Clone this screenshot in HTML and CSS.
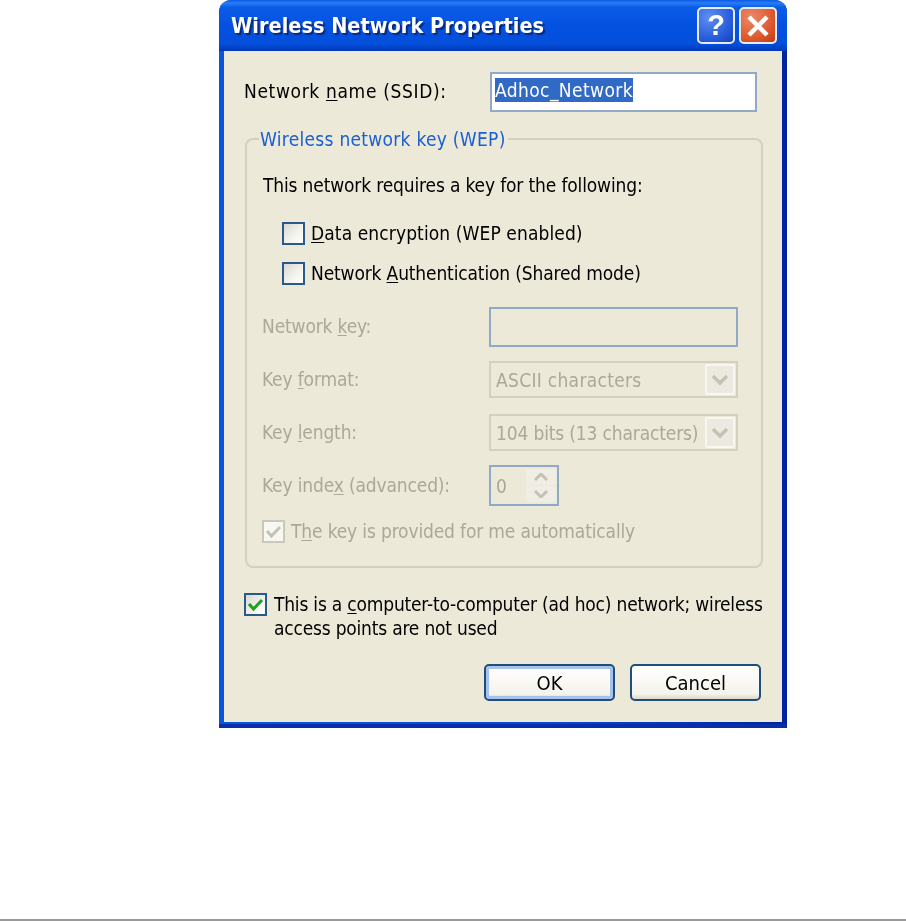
FILE: index.html
```html
<!DOCTYPE html>
<html lang="en">
  <head>
    <meta charset="utf-8">
    <meta name="viewport" content="width=device-width, initial-scale=1.0">
    <title>Wireless Network Properties</title>
    <link rel="stylesheet" href="styles.css">
  </head>
  <body>
    <div class="dialog">
      <div class="titlebar">
        <span class="title-text">Wireless Network Properties</span>
        <div class="title-buttons">
          <div class="title-button help-button">?</div>
          <div class="title-button close-button">
            <svg width="24" height="24" viewBox="0 0 24 24"><path d="M3 3 L21 21 M21 3 L3 21" stroke="#fff" stroke-width="4.5" fill="none"/></svg>
          </div>
        </div>
      </div>
      <div class="client">
        <div class="name-row">
          <span class="name-label">Network <u>n</u>ame (SSID):</span>
          <div class="name-input"><span class="selected-text">Adhoc_Network</span></div>
        </div>

        <fieldset class="key-group">
          <legend>Wireless network key (WEP)</legend>
          <div class="intro">This network requires a key for the following:</div>

          <div class="check-row first-check">
            <span class="checkbox"></span>
            <span><u>D</u>ata encryption (WEP enabled)</span>
          </div>
          <div class="check-row second-check">
            <span class="checkbox"></span>
            <span>Network <u>A</u>uthentication (Shared mode)</span>
          </div>

          <div class="field-row key-row">
            <span class="field-label">Network <u>k</u>ey:</span>
            <div class="text-box"></div>
          </div>
          <div class="field-row format-row">
            <span class="field-label">Key <u>f</u>ormat:</span>
            <div class="select-box">
              <span class="select-value ascii-value">ASCII characters</span>
              <span class="select-arrow">
                <svg width="20" height="12" viewBox="0 0 20 12"><path d="M3 2 L10 9 L17 2" stroke="#c4c2b2" stroke-width="3.5" fill="none"/></svg>
              </span>
            </div>
          </div>
          <div class="field-row length-row">
            <span class="field-label">Key <u>l</u>ength:</span>
            <div class="select-box">
              <span class="select-value">104 bits (13 characters)</span>
              <span class="select-arrow">
                <svg width="20" height="12" viewBox="0 0 20 12"><path d="M3 2 L10 9 L17 2" stroke="#c4c2b2" stroke-width="3.5" fill="none"/></svg>
              </span>
            </div>
          </div>
          <div class="field-row index-row">
            <span class="field-label">Key inde<u>x</u> (advanced):</span>
            <div class="spin-box">
              <span class="spin-value">0</span>
              <div class="spin-buttons">
                <span class="spin-button"><svg width="14" height="8" viewBox="0 0 14 8"><path d="M1 7 L7 1 L13 7" stroke="#c4c2b2" stroke-width="3" fill="none"/></svg></span>
                <span class="spin-button"><svg width="14" height="8" viewBox="0 0 14 8"><path d="M1 1 L7 7 L13 1" stroke="#c4c2b2" stroke-width="3" fill="none"/></svg></span>
              </div>
            </div>
          </div>

          <div class="check-row auto-check disabled">
            <span class="checkbox checkbox-disabled">
              <svg width="17" height="15" viewBox="0 0 17 15"><path d="M2 7 L6.5 12 L15 3" stroke="#c4c2b2" stroke-width="3" fill="none"/></svg>
            </span>
            <span>T<u>h</u>e key is provided for me automatically</span>
          </div>
        </fieldset>

        <div class="adhoc-row">
          <span class="checkbox">
            <svg width="17" height="15" viewBox="0 0 17 15"><path d="M2 7 L6.5 12 L15 3" stroke="#21a121" stroke-width="3.2" fill="none"/></svg>
          </span>
          <span class="adhoc-text">This is a <u>c</u>omputer-to-computer (ad hoc) network; wireless<br>access points are not used</span>
        </div>

        <div class="actions">
          <button class="action-button default-button">OK</button>
          <button class="action-button">Cancel</button>
        </div>
      </div>
    </div>
    <div class="page-rule"></div>
  </body>
</html>
```
FILE: styles.css
```css
body {
  margin: 0;
  padding: 0;
  background: #fff;
  color: #000;
  font-family: "DejaVu Sans", "Liberation Sans", sans-serif;
  font-stretch: condensed;
  font-size: 19px;
  letter-spacing: -0.15px;
}
u {
  text-underline-offset: 2px;
}
.dialog {
  box-sizing: border-box;
  display: flex;
  flex-direction: column;
  width: 568px;
  height: 728px;
  margin-left: 219px;
  padding: 0 5px 2px 5px;
  border-radius: 12px 12px 0 0;
  background: linear-gradient(90deg, #0a55d8 0%, #0648d0 60%, #00249c 100%);
  border-bottom: 4px solid #0a2ea8;
  filter: blur(0.5px);
}
.titlebar {
  display: flex;
  align-items: center;
  height: 51px;
  margin: 0 -5px;
  padding: 0 10px 0 12px;
  box-sizing: border-box;
  border-radius: 12px 12px 0 0;
  background: linear-gradient(180deg, #0a5ae6 0%, #2c7cf4 6%, #0a5ce8 14%, #0450e0 55%, #0450dc 85%, #0038b8 100%);
}
.title-text {
  color: #fff;
  font-weight: bold;
  font-size: 21.5px;
  letter-spacing: 0;
  text-shadow: 2px 2px 1px #0a2a80;
}
.title-buttons {
  display: flex;
  gap: 4px;
  margin-left: auto;
}
.title-button {
  box-sizing: border-box;
  display: flex;
  align-items: center;
  justify-content: center;
  width: 38px;
  height: 37px;
  border: 2px solid #e4ecfb;
  border-radius: 5px;
}
.help-button {
  background: radial-gradient(circle at 30% 25%, #5f8ff0 0%, #2a5fdc 60%, #1540b8 100%);
  color: #fff;
  font-family: "Liberation Sans", sans-serif;
  font-size: 29px;
  font-weight: bold;
}
.close-button {
  background: radial-gradient(circle at 30% 25%, #ea8a68 0%, #df5a30 60%, #c03a10 100%);
}
.client {
  flex: 1;
  padding: 0 21px 0 20px;
  background: #ece9d8;
}
.name-row {
  display: flex;
  align-items: center;
  margin-top: 21px;
}
.name-label {
  width: 246px;
  padding-bottom: 2px;
  letter-spacing: 0.65px;
}
.name-input {
  box-sizing: border-box;
  display: flex;
  align-items: center;
  width: 267px;
  height: 40px;
  padding: 0 0 4px 3px;
  border: 2px solid #8fa9c6;
  background: #fff;
}
.selected-text {
  background: #316ac5;
  color: #fff;
  line-height: 24px;
  letter-spacing: 0.4px;
}
.key-group {
  box-sizing: border-box;
  width: 518px;
  min-width: 0;
  margin: 16px 0 0 1px;
  padding: 0 15px 23px 15px;
  border: 2px solid #d3d0bf;
  border-radius: 8px;
}
.key-group legend {
  margin-left: -3px;
  padding: 0 2px 0 1px;
  color: #1b5fd0;
  line-height: 22px;
  letter-spacing: 0.28px;
}
.intro {
  margin: 23px 0 0 1px;
  line-height: 24px;
}
.check-row {
  display: flex;
  align-items: center;
  gap: 6px;
  height: 23px;
  line-height: 23px;
}
.first-check {
  margin: 25px 0 0 20px;
  letter-spacing: 0.1px;
}
.second-check {
  margin: 17px 0 0 20px;
}
.auto-check {
  margin-top: 14px;
}
.checkbox {
  box-sizing: border-box;
  display: flex;
  flex: none;
  align-items: center;
  justify-content: center;
  width: 23px;
  height: 23px;
  border: 2px solid #2a5a8c;
  background: linear-gradient(135deg, #d8d8d0 0%, #f2f2ec 55%, #fff 100%);
}
.checkbox-disabled {
  border-color: #cac8b6;
  background: #f8f8f2;
}
.disabled,
.field-label,
.select-value,
.spin-value {
  color: #aca899;
}
.field-row {
  display: flex;
  align-items: center;
}
.field-label {
  width: 227px;
  padding-bottom: 2px;
}
.key-row {
  margin-top: 22px;
}
.format-row {
  margin-top: 14px;
}
.length-row {
  margin-top: 16px;
}
.index-row {
  margin-top: 14px;
}
.text-box {
  box-sizing: border-box;
  width: 249px;
  height: 40px;
  border: 2px solid #8fa9c6;
}
.select-box {
  box-sizing: border-box;
  display: flex;
  flex: none;
  align-items: center;
  justify-content: space-between;
  width: 249px;
  height: 37px;
  padding: 1px 1px 1px 5px;
  border: 2px solid #d3d0bf;
}
.ascii-value {
  letter-spacing: 0.3px;
}
.select-arrow {
  box-sizing: border-box;
  display: flex;
  align-items: center;
  justify-content: center;
  width: 30px;
  height: 100%;
  border: 2px solid #f8f7f0;
  border-radius: 3px;
  background: #eceae0;
}
.spin-box {
  box-sizing: border-box;
  display: flex;
  align-items: center;
  justify-content: space-between;
  width: 70px;
  height: 41px;
  padding: 2px 1px 2px 5px;
  border: 2px solid #8fa9c6;
}
.spin-buttons {
  display: flex;
  flex-direction: column;
  gap: 1px;
  width: 30px;
  height: 100%;
}
.spin-button {
  display: flex;
  flex: 1;
  align-items: center;
  justify-content: center;
  border-radius: 2px;
  background: #f0eee4;
}
.adhoc-row {
  display: flex;
  gap: 7px;
  margin-top: 24px;
}
.adhoc-row .checkbox {
  margin-top: 1px;
}
.adhoc-text {
  line-height: 24px;
  letter-spacing: -0.2px;
  white-space: nowrap;
}
.actions {
  display: flex;
  justify-content: flex-end;
  gap: 15px;
  margin-top: 24px;
}
.action-button {
  box-sizing: border-box;
  width: 131px;
  height: 37px;
  padding: 0;
  border: 2px solid #1d4f7c;
  border-radius: 5px;
  background: linear-gradient(180deg, #fff 0%, #f4f3ec 85%, #dcd8c8 100%);
  color: #000;
  font-family: inherit;
  font-stretch: inherit;
  font-size: 20px;
}
.default-button {
  box-shadow: inset 0 0 0 3px #a8c2ee;
}
.page-rule {
  height: 2px;
  margin-top: 191px;
  background: #999;
}
```
